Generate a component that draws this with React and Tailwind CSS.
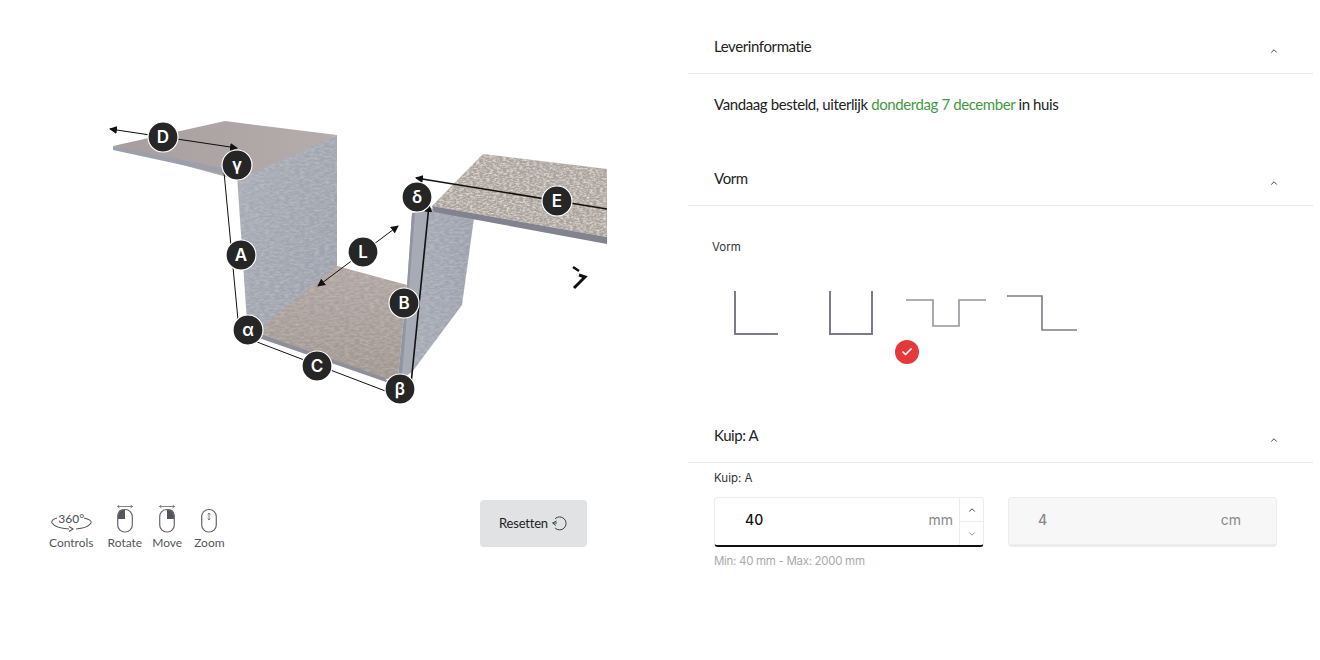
import { ChevronUp, ChevronDown, Check } from "lucide-react";

const markers = [
  ["D", 163, 137],
  ["γ", 237, 165],
  ["A", 241, 255],
  ["L", 363, 252],
  ["δ", 417, 197],
  ["E", 557, 201],
  ["B", 404, 303],
  ["α", 248, 330],
  ["C", 317, 366],
  ["β", 400, 389],
];

function Model() {
  return (
    <svg width="607" height="500" viewBox="0 0 607 500" className="block">
      <defs>
        <linearGradient id="wall" x1="0" y1="0" x2="1" y2="1">
          <stop offset="0" stopColor="#a9acb5" />
          <stop offset="1" stopColor="#9ba0ab" />
        </linearGradient>
        <linearGradient id="plate" x1="0" y1="0" x2="1" y2="0">
          <stop offset="0" stopColor="#a89e9f" />
          <stop offset="1" stopColor="#b5acac" />
        </linearGradient>
        <linearGradient id="floor" x1="0" y1="0" x2="0" y2="1">
          <stop offset="0" stopColor="#b0a5a1" />
          <stop offset="1" stopColor="#a0958f" />
        </linearGradient>
        <linearGradient id="rightwall" x1="0" y1="0" x2="1" y2="0">
          <stop offset="0" stopColor="#a7abb5" />
          <stop offset="1" stopColor="#9ca1ad" />
        </linearGradient>
        <filter id="speckle" x="0" y="0" width="100%" height="100%">
          <feTurbulence type="fractalNoise" baseFrequency="0.3 0.6" numOctaves="3" seed="4" />
          <feColorMatrix values="0 0 0 0 1  0 0 0 0 0.96  0 0 0 0 0.88  1.3 0 0 0 -0.5" />
          <feComposite in2="SourceGraphic" operator="in" result="noise" />
          <feMerge>
            <feMergeNode in="SourceGraphic" />
            <feMergeNode in="noise" />
          </feMerge>
        </filter>
        <filter id="grain" x="0" y="0" width="100%" height="100%">
          <feTurbulence type="fractalNoise" baseFrequency="0.2 0.5" numOctaves="2" seed="9" />
          <feColorMatrix values="0 0 0 0 1  0 0 0 0 1  0 0 0 0 1  0.35 0 0 0 -0.12" />
          <feComposite in2="SourceGraphic" operator="in" result="noise" />
          <feMerge>
            <feMergeNode in="SourceGraphic" />
            <feMergeNode in="noise" />
          </feMerge>
        </filter>
        <marker id="head" markerWidth="9" markerHeight="8" refX="7" refY="4" orient="auto-start-reverse" markerUnits="userSpaceOnUse">
          <path d="M0 0 L8 4 L0 8 Z" fill="#111" />
        </marker>
      </defs>

      {/* left top plate and back wall */}
      <polygon points="237,175 337,135 337,268 260,333 247,322" fill="url(#wall)" filter="url(#grain)" />
      <polygon points="113,146 225,121 337,135 238,180" fill="url(#plate)" />
      <polygon points="113,146 222,168 224,174 113,150" fill="#9ba0ab" />

      {/* floor */}
      <polygon points="337,266 407,285 398,378 385,379 256,332" fill="url(#floor)" filter="url(#grain)" />
      <polygon points="256,332 385,378 389,383 256,337" fill="#8d8f99" />

      {/* right wall */}
      <polygon points="430,208 474,218 462,305 412,372 403,378" fill="url(#rightwall)" filter="url(#grain)" />
      <polygon points="412,213 431,210 412,372 398,378 407,287" fill="#a7abb5" />
      <polygon points="407,287 412,213 415,213 402,376 398,378" fill="#9095a1" />

      {/* right top plate */}
      <polygon points="432,206 483,154 607,169 607,237" fill="#aba39e" filter="url(#speckle)" />
      <polygon points="432,206 607,237 607,244 434,212" fill="#82838f" />

      {/* dimension lines */}
      <g stroke="#111" fill="none">
        <line x1="110" y1="129" x2="237" y2="148" strokeWidth="1.2" markerStart="url(#head)" markerEnd="url(#head)" />
        <line x1="224" y1="172" x2="238" y2="320" strokeWidth="1" />
        <line x1="257" y1="342" x2="388" y2="392" strokeWidth="1" />
        <line x1="398" y1="226" x2="318" y2="286" strokeWidth="1" markerStart="url(#head)" markerEnd="url(#head)" />
        <line x1="429" y1="205" x2="410" y2="394" strokeWidth="1.6" markerStart="url(#head)" markerEnd="url(#head)" />
        <line x1="416" y1="178" x2="607" y2="209" strokeWidth="1.6" markerStart="url(#head)" />
      </g>

      {markers.map(([label, x, y]) => (
        <g key={label}>
          <circle cx={x} cy={y} r="15" fill="#262626" stroke="#fff" strokeWidth="1.2" />
          <text x={x} y={y + 6} textAnchor="middle" fontSize="17" fontWeight="600" fill="#fff" fontFamily="Inter, sans-serif">
            {label}
          </text>
        </g>
      ))}

      {/* next arrow */}
      <path d="M573 267 L579 271" stroke="#111" strokeWidth="2.4" fill="none" />
      <path d="M579 275 L585 277 L574 288" stroke="#111" strokeWidth="3" fill="none" />
    </svg>
  );
}

function Mouse({ fill, arrows }) {
  return (
    <svg width="22" height="30" viewBox="0 0 22 30" fill="none" stroke="#66676d" strokeWidth="1.2">
      {arrows && <path d="M3.5 1.5 H18.5 M5.5 0 L3.5 1.5 L5.5 3 M16.5 0 L18.5 1.5 L16.5 3" strokeWidth="0.8" />}
      {fill === "left" && <path d="M11 4.5 H8.5 Q4 4.5 4 9 V14 H11 Z" fill="#55565c" stroke="none" />}
      {fill === "right" && <path d="M11 4.5 H13.5 Q18 4.5 18 9 V14 H11 Z" fill="#55565c" stroke="none" />}
      <rect x="3.7" y="4.5" width="14.6" height="22.5" rx="7" />
      {!fill && <path d="M11 8 V15 M9.7 9.5 L11 8 L12.3 9.5 M9.7 13.5 L11 15 L12.3 13.5" strokeWidth="0.8" />}
    </svg>
  );
}

function Control({ label, className, children }) {
  return (
    <div className={`flex flex-col items-center ${className || ""}`}>
      <div className="flex h-[30px] items-start justify-center">{children}</div>
      <span className="text-[12px] leading-4 text-[#55565c]">{label}</span>
    </div>
  );
}

function SectionHeader({ title }) {
  return (
    <div className="flex h-[53px] items-center justify-between border-b border-[#e6e6e6] pl-[26px] pr-[34px]">
      <span className="mb-[2px] text-[15px] tracking-[-0.4px] text-[#222]">{title}</span>
      <ChevronUp size={10} strokeWidth={2} className="mt-2 text-[#222]" />
    </div>
  );
}

export default function App() {
  return (
    <main className="flex h-[660px] w-[1320px] overflow-hidden bg-white font-['Lato',sans-serif] text-[#222]">
      <section className="w-[607px] shrink-0">
        <Model />
        <div className="flex items-start justify-between pl-[49px] pr-5">
          <div className="flex pt-[5px]">
            <Control label="Controls">
              <div className="relative h-[30px] w-[44px]">
                <svg width="44" height="30" viewBox="0 0 44 30" fill="none" stroke="#55565c" strokeWidth="1.1" className="absolute inset-0">
                  <path d="M8 13 C4 14 2 16 3 18 C5 21 11 23.5 20 24" />
                  <path d="M35 13 C40 14 43 16 42 18 C40 21 34 23.5 27 24" />
                  <path d="M20 21.5 L24 24 L20 26.5" />
                </svg>
                <span className="absolute left-[9px] top-[6px] text-[12px] font-medium leading-4 text-[#55565c]">360°</span>
              </div>
            </Control>
            <Control label="Rotate" className="ml-[14px]">
              <Mouse fill="left" arrows />
            </Control>
            <Control label="Move" className="ml-[10px]">
              <Mouse fill="right" arrows />
            </Control>
            <Control label="Zoom" className="ml-[12px]">
              <Mouse />
            </Control>
          </div>
          <button className="flex h-[47px] w-[107px] items-center justify-center gap-[3px] rounded-sm bg-[#e1e2e4] text-[13px] tracking-[-0.2px] text-[#222]">
            Resetten
            <svg width="17" height="17" viewBox="0 0 17 17" fill="none" stroke="#444" strokeWidth="1">
              <path d="M4 3.8 A6.5 6.5 0 1 1 4 13" />
              <path d="M5.5 6 L1.5 8 L5 10.5" />
              <path d="M2 8 H6" />
            </svg>
          </button>
        </div>
      </section>

      <section className="ml-[81px] w-[625px] shrink-0 pt-[21px]">
        <SectionHeader title="Leverinformatie" />
        <div className="h-[79px] pl-[26px] pt-[20px] text-[15px] leading-5 tracking-[-0.4px]">
          Vandaag besteld, uiterlijk <span className="text-[#3f9a3f]">donderdag 7 december</span> in huis
        </div>

        <SectionHeader title="Vorm" />
        <div className="h-[204px]">
          <div className="pl-6 pt-[33px] font-['Inter',sans-serif] text-[11.5px] leading-4 text-[#333]">Vorm</div>
          <div className="ml-[46px] mt-[36px] flex items-start">
            <svg width="45" height="44" viewBox="0 0 45 44" fill="none" stroke="#7b7c87" strokeWidth="2">
              <path d="M1 0 V43 H44" />
            </svg>
            <svg width="44" height="44" viewBox="0 0 44 44" fill="none" stroke="#7b7c87" strokeWidth="2" className="ml-[50px]">
              <path d="M1 0 V43 H43 V0" />
            </svg>
            <div className="relative ml-[33px]">
              <svg width="80" height="44" viewBox="0 0 80 44" fill="none" stroke="#94959e" strokeWidth="1.6" className="block">
                <path d="M0 9 H27 V35 H53 V9 H80" />
              </svg>
              <div className="absolute left-[-11px] top-[49px] flex h-6 w-6 items-center justify-center rounded-full bg-[#e5383b]">
                <Check size={12} strokeWidth={3.5} className="text-white" />
              </div>
            </div>
            <svg width="70" height="44" viewBox="0 0 70 44" fill="none" stroke="#7b7c87" strokeWidth="1.6" className="ml-[21px]">
              <path d="M0 5 H35 V39 H70" />
            </svg>
          </div>
        </div>

        <SectionHeader title="Kuip: A" />
        <div className="pl-[26px] font-['Inter',sans-serif]">
          <div className="pt-[7px] text-[11.5px] leading-4 text-[#333]">Kuip: A</div>
          <div className="mt-[11px] flex gap-6">
            <div className="flex h-[50px] w-[270px] rounded-[4px] border border-b-2 border-[#ececec] border-b-[#111]">
              <div className="flex flex-1 items-center justify-between pb-1 pl-[30px] pr-[6px]">
                <span className="text-[14px] font-medium text-[#111]">40</span>
                <span className="text-[14px] text-[#888]">mm</span>
              </div>
              <div className="flex w-6 flex-col border-l border-[#ececec]">
                <div className="flex flex-1 items-center justify-center border-b border-[#ececec]">
                  <ChevronUp size={10} strokeWidth={2} className="text-[#222]" />
                </div>
                <div className="flex flex-1 items-center justify-center">
                  <ChevronDown size={10} strokeWidth={1.6} className="text-[#666]" />
                </div>
              </div>
            </div>
            <div className="flex h-[50px] w-[269px] items-center justify-between rounded-[4px] border border-b-[3px] border-[#ececec] bg-[#f7f7f7] pb-1 pl-[29px] pr-[35px] text-[#888]">
              <span className="text-[14px] font-medium">4</span>
              <span className="text-[14px]">cm</span>
            </div>
          </div>
          <div className="mt-[6px] text-[11.5px] leading-4 tracking-[-0.3px] text-[#aaa]">Min: 40 mm - Max: 2000 mm</div>
        </div>
      </section>
    </main>
  );
}
